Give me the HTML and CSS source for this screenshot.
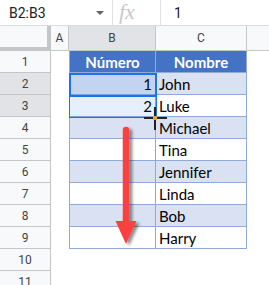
FILE: index.html
```html
<!DOCTYPE html>
<html lang="es">
<head>
    <meta charset="UTF-8">
    <title>Hoja</title>
    <link rel="stylesheet" href="styles.css">
</head>
<body>
    <div class="formula-bar">
        <div class="name-box">
            <span class="name-text">B2:B3</span>
            <span class="name-arrow"></span>
        </div>
        <div class="fx">fx</div>
        <div class="formula-value">1</div>
    </div>

    <div class="sheet">
        <div class="corner"></div>
        <div class="col-head">A</div>
        <div class="col-head selected">B</div>
        <div class="col-head">C</div>
        <div class="col-rest"></div>

        <div class="row-head">1</div>
        <div class="cell"></div>
        <div class="tcell tleft thead">Número</div>
        <div class="tcell thead">Nombre</div>
        <div class="cell"></div>

        <div class="row-head selected">2</div>
        <div class="cell"></div>
        <div class="tcell tleft stripe num">1</div>
        <div class="tcell stripe">John</div>
        <div class="cell"></div>

        <div class="row-head selected">3</div>
        <div class="cell"></div>
        <div class="tcell tleft num">2</div>
        <div class="tcell">Luke</div>
        <div class="cell"></div>

        <div class="row-head">4</div>
        <div class="cell"></div>
        <div class="tcell tleft stripe"></div>
        <div class="tcell stripe">Michael</div>
        <div class="cell"></div>

        <div class="row-head">5</div>
        <div class="cell"></div>
        <div class="tcell tleft"></div>
        <div class="tcell">Tina</div>
        <div class="cell"></div>

        <div class="row-head">6</div>
        <div class="cell"></div>
        <div class="tcell tleft stripe"></div>
        <div class="tcell stripe">Jennifer</div>
        <div class="cell"></div>

        <div class="row-head">7</div>
        <div class="cell"></div>
        <div class="tcell tleft"></div>
        <div class="tcell">Linda</div>
        <div class="cell"></div>

        <div class="row-head">8</div>
        <div class="cell"></div>
        <div class="tcell tleft stripe"></div>
        <div class="tcell stripe">Bob</div>
        <div class="cell"></div>

        <div class="row-head">9</div>
        <div class="cell"></div>
        <div class="tcell tleft"></div>
        <div class="tcell">Harry</div>
        <div class="cell"></div>

        <div class="row-head">10</div>
        <div class="cell"></div>
        <div class="cell"></div>
        <div class="cell"></div>
        <div class="cell"></div>

        <div class="row-head">11</div>
        <div class="cell"></div>
        <div class="cell"></div>
        <div class="cell"></div>
        <div class="cell"></div>

        <!-- selection B2:B3 -->
        <div class="selection"></div>
        <div class="active-cell"></div>

        <!-- fill cursor -->
        <div class="cursor">
            <span class="cursor-h"></span>
            <span class="cursor-v"></span>
            <span class="cursor-dot"></span>
        </div>

        <!-- red arrow -->
        <svg class="arrow" width="30" height="124" viewBox="0 0 30 124">
            <defs>
                <filter id="shadow" x="-50%" y="-10%" width="200%" height="130%">
                    <feGaussianBlur in="SourceAlpha" stdDeviation="1.6"/>
                    <feOffset dx="3" dy="2"/>
                    <feComponentTransfer><feFuncA type="linear" slope="0.45"/></feComponentTransfer>
                    <feMerge><feMergeNode/><feMergeNode in="SourceGraphic"/></feMerge>
                </filter>
            </defs>
            <g filter="url(#shadow)">
                <line x1="12" y1="5" x2="12" y2="100" stroke="#fb3f3f" stroke-width="6.5" stroke-linecap="round"/>
                <polygon points="1.5,96 22.5,96 12,119" fill="#fb3f3f"/>
            </g>
        </svg>
    </div>
</body>
</html>
```

FILE: styles.css
```css
* {
    margin: 0;
    padding: 0;
    box-sizing: border-box;
}

body {
    width: 269px;
    height: 285px;
    overflow: hidden;
    background: #fff;
    font-family: Roboto, Arial, sans-serif;
}

/* formula bar */
.formula-bar {
    display: flex;
    align-items: center;
    height: 26px;
    border-bottom: 1px solid #dadce0;
}

.name-box {
    display: flex;
    align-items: center;
    justify-content: space-between;
    width: 113px;
    height: 100%;
    padding: 0 8px 0 9px;
    border-right: 1px solid #e0e0e0;
    font-size: 14px;
    color: #202124;
}

.name-arrow {
    width: 0;
    height: 0;
    border-left: 4px solid transparent;
    border-right: 4px solid transparent;
    border-top: 4px solid #5f6368;
}

.fx {
    width: 48px;
    height: 100%;
    padding-left: 6px;
    border-right: 1px solid #e0e0e0;
    font-family: "Liberation Serif", serif;
    font-style: italic;
    font-size: 22px;
    line-height: 24px;
    color: #c8c8c8;
}

.formula-value {
    padding-left: 13px;
    font-size: 14px;
    color: #202124;
}

/* grid */
.sheet {
    position: relative;
    display: grid;
    grid-template-columns: 51px 18px 87px 91px 1fr;
    grid-template-rows: 25px;
    grid-auto-rows: 22px;
}

.corner {
    background: #f8f9fa;
    border-right: 4px solid #c4c7c5;
    border-bottom: 4px solid #c4c7c5;
}

.col-head {
    display: flex;
    align-items: center;
    justify-content: center;
    background: #f8f9fa;
    border-right: 1px solid #c4c7c5;
    border-bottom: 1px solid #c4c7c5;
    font-size: 12px;
    color: #444;
}

.col-head.selected {
    background: #e1e3e6;
}

.col-rest {
    background: #f8f9fa;
    border-bottom: 1px solid #c4c7c5;
}

.row-head {
    display: flex;
    align-items: center;
    justify-content: center;
    background: #f8f9fa;
    border-right: 1px solid #c4c7c5;
    border-bottom: 1px solid #c4c7c5;
    font-size: 12px;
    color: #444;
}

.row-head.selected {
    background: #e1e3e6;
}

.cell {
    background: #fff;
}

.tcell {
    display: flex;
    align-items: center;
    padding: 0 3px;
    background: #fff;
    border-right: 1px solid #8eaadb;
    border-bottom: 1px solid #8eaadb;
    font-family: Lato, "Open Sans", sans-serif;
    font-size: 15px;
    color: #000;
}

.tleft {
    border-left: 1px solid #8eaadb;
}

.stripe {
    background: #d9e1f2;
}

.num {
    justify-content: flex-end;
}

.thead {
    justify-content: center;
    background: #4472c4;
    color: #fff;
    font-weight: bold;
}

/* selection overlays */
.selection {
    position: absolute;
    left: 69px;
    top: 47px;
    width: 88px;
    height: 45px;
    border: 1px solid #1a73e8;
    background: rgba(14, 101, 235, 0.1);
}

.active-cell {
    position: absolute;
    left: 69px;
    top: 47px;
    width: 88px;
    height: 24px;
    border: 2px solid #1a73e8;
}

.cursor {
    position: absolute;
    left: 144px;
    top: 81px;
    width: 23px;
    height: 23px;
}

.cursor-h {
    position: absolute;
    left: 0;
    top: 10px;
    width: 23px;
    height: 2px;
    background: #222;
}

.cursor-v {
    position: absolute;
    left: 10px;
    top: 0;
    width: 2px;
    height: 23px;
    background: #222;
}

.cursor-dot {
    position: absolute;
    left: 9px;
    top: 9px;
    width: 4px;
    height: 4px;
    background: #f0a030;
}

.arrow {
    position: absolute;
    left: 114px;
    top: 99px;
}
```
